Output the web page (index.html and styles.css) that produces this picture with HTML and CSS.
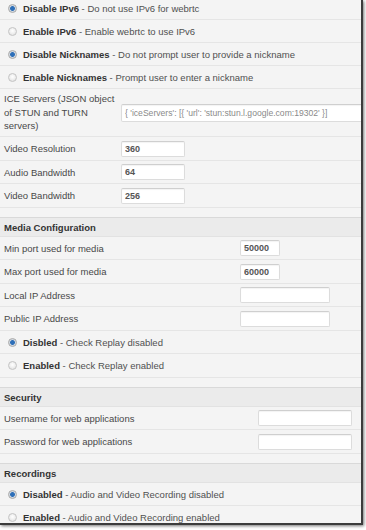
FILE: index.html
```html
<!DOCTYPE html>
<html>
<head>
<meta charset="utf-8">
<link rel="stylesheet" href="styles.css">
</head>
<body>
<div class="window">
  <div class="content">
    <section class="sec sec-general">
      <div class="row radio-row"><input type="radio" name="ipv6" checked><span><b>Disable IPv6</b> - Do not use IPv6 for webrtc</span></div>
      <div class="row radio-row"><input type="radio" name="ipv6"><span><b>Enable IPv6</b> - Enable webrtc to use IPv6</span></div>
      <div class="row radio-row"><input type="radio" name="nick" checked><span><b>Disable Nicknames</b> - Do not prompt user to provide a nickname</span></div>
      <div class="row radio-row"><input type="radio" name="nick"><span><b>Enable Nicknames</b> - Prompt user to enter a nickname</span></div>
      <div class="row field-row tall"><label>ICE Servers (JSON object of STUN and TURN servers)</label><input class="in ice" type="text" value="{ 'iceServers': [{ 'url': 'stun:stun.l.google.com:19302' }]"></div>
      <div class="row field-row"><label>Video Resolution</label><input class="in short" type="text" value="360"></div>
      <div class="row field-row"><label>Audio Bandwidth</label><input class="in short" type="text" value="64"></div>
      <div class="row field-row"><label>Video Bandwidth</label><input class="in short" type="text" value="256"></div>
    </section>

    <h3 class="head">Media Configuration</h3>
    <section class="sec sec-media">
      <div class="row field-row"><label>Min port used for media</label><input class="in port" type="text" value="50000"></div>
      <div class="row field-row"><label>Max port used for media</label><input class="in port" type="text" value="60000"></div>
      <div class="row field-row"><label>Local IP Address</label><input class="in ip" type="text" value=""></div>
      <div class="row field-row"><label>Public IP Address</label><input class="in ip" type="text" value=""></div>
      <div class="row radio-row"><input type="radio" name="replay" checked><span><b>Disbled</b> - Check Replay disabled</span></div>
      <div class="row radio-row"><input type="radio" name="replay"><span><b>Enabled</b> - Check Replay enabled</span></div>
    </section>

    <h3 class="head">Security</h3>
    <section class="sec sec-security">
      <div class="row field-row"><label>Username for web applications</label><input class="in cred" type="text" value=""></div>
      <div class="row field-row"><label>Password for web applications</label><input class="in cred" type="password" value=""></div>
    </section>

    <h3 class="head">Recordings</h3>
    <section class="sec">
      <div class="row radio-row"><input type="radio" name="rec" checked><span><b>Disabled</b> - Audio and Video Recording disabled</span></div>
      <div class="row radio-row"><input type="radio" name="rec"><span><b>Enabled</b> - Audio and Video Recording enabled</span></div>
    </section>
  </div>
</div>
</body>
</html>
```

FILE: styles.css
```css
* { box-sizing: border-box; }

html, body {
  margin: 0;
  padding: 0;
  background: #ffffff;
}

body {
  width: 366px;
  height: 530px;
  overflow: hidden;
  font-family: "Liberation Sans", Arial, sans-serif;
  font-size: 9.5px;
  color: #4a4a4a;
}

.window {
  width: 363px;
  height: 525px;
  background: #f4f4f4;
  border-right: 2px solid #3c3c3c;
  border-bottom: 2px solid #3c3c3c;
  box-shadow: 1px 1px 3px rgba(0, 0, 0, 0.55);
  overflow: hidden;
}

.content {
  margin-top: -3px;
}

.sec {
  padding-bottom: 9px;
}

.row {
  border-bottom: 1px solid #e5e5e5;
  height: 23.5px;
  align-items: center;
  padding-top: 1px;
}

.sec-general .radio-row {
  height: 23px;
  padding-top: 0;
}

.radio-row {
  display: flex;
  padding-left: 8px;
  gap: 6px;
  white-space: nowrap;
}

.radio-row b {
  color: #333;
  font-weight: bold;
}

.radio-row span {
  color: #505050;
}

input[type="radio"] {
  -webkit-appearance: none;
  appearance: none;
  margin: 0;
  width: 9px;
  height: 9px;
  flex: none;
  border-radius: 50%;
  border: 1px solid #c4c4c4;
  background: radial-gradient(circle at 50% 40%, #ffffff 0, #f2f2f2 40%, #dcdcdc 100%);
}

input[type="radio"]:checked {
  border-color: #a8a8a8;
  background: radial-gradient(circle, #2e6fb8 0, #2e6fb8 2px, #cfd8e2 2.8px, #e6e6e6 100%);
}

.field-row {
  display: grid;
  padding-left: 4px;
  color: #484848;
}

.sec-general .field-row { grid-template-columns: 117px auto; }
.sec-media .field-row { grid-template-columns: 236px auto; }
.sec-security .field-row { grid-template-columns: 254px auto; }

.field-row.tall {
  height: 48px;
  align-items: center;
  padding-top: 0;
}

.field-row label {
  line-height: 13.5px;
}

.in {
  font-family: "Liberation Sans", Arial, sans-serif;
  font-size: 9px;
  font-weight: bold;
  color: #555;
  height: 16px;
  padding: 0 3px;
  margin: 0;
  background: #fff;
  border: 1px solid #dcdcdc;
  border-top-color: #cfcfcf;
  border-radius: 2px;
  box-shadow: inset 0 1px 1px rgba(0, 0, 0, 0.05);
  outline: none;
}

.in.ice {
  width: 270px;
  height: 18px;
  font-weight: normal;
  color: #8a8a8a;
  font-size: 8.6px;
}

.in.short { width: 64px; }
.in.port { width: 40px; }
.in.ip { width: 90px; }
.in.cred { width: 94px; }

.head {
  margin: 0;
  height: 20px;
  line-height: 19px;
  padding-left: 4px;
  font-size: 9.5px;
  font-weight: bold;
  color: #333;
  background: #ebebeb;
  border-top: 1px solid #d9d9d9;
  border-bottom: 1px solid #e2e2e2;
}
```
